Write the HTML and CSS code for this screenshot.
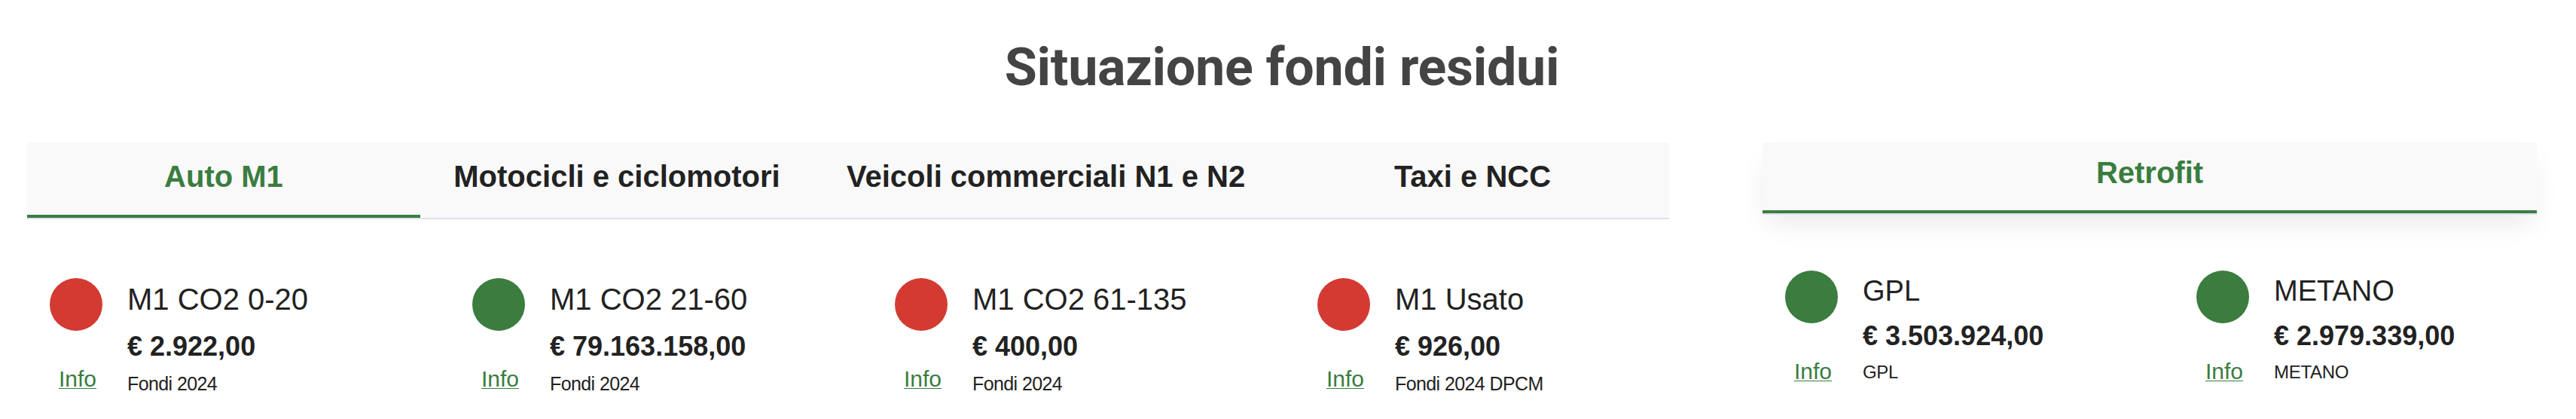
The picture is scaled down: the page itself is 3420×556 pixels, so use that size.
FILE: index.html
```html
<!DOCTYPE html>
<html lang="it">
<head>
<meta charset="utf-8">
<title>Situazione fondi residui</title>
<link rel="stylesheet" href="styles.css">
</head>
<body>
<main class="page">
  <h1 class="title">Situazione fondi residui</h1>
  <div class="panels">
    <section class="panel panel-main">
      <nav class="tabs">
        <a class="tab active">Auto M1</a>
        <a class="tab">Motocicli e ciclomotori</a>
        <a class="tab">Veicoli commerciali N1 e N2</a>
        <a class="tab">Taxi e NCC</a>
      </nav>
      <div class="items items-main">
        <div class="item">
          <div class="side"><span class="dot red"></span><a class="info" href="#">Info</a></div>
          <div class="body"><div class="name">M1 CO2 0-20</div><div class="amount">€ 2.922,00</div><div class="note">Fondi 2024</div></div>
        </div>
        <div class="item">
          <div class="side"><span class="dot green"></span><a class="info" href="#">Info</a></div>
          <div class="body"><div class="name">M1 CO2 21-60</div><div class="amount">€ 79.163.158,00</div><div class="note">Fondi 2024</div></div>
        </div>
        <div class="item">
          <div class="side"><span class="dot red"></span><a class="info" href="#">Info</a></div>
          <div class="body"><div class="name">M1 CO2 61-135</div><div class="amount">€ 400,00</div><div class="note">Fondi 2024</div></div>
        </div>
        <div class="item">
          <div class="side"><span class="dot red"></span><a class="info" href="#">Info</a></div>
          <div class="body"><div class="name">M1 Usato</div><div class="amount">€ 926,00</div><div class="note">Fondi 2024 DPCM</div></div>
        </div>
      </div>
    </section>
    <section class="panel panel-retro">
      <div class="retro-head"><span class="retro-label">Retrofit</span></div>
      <div class="items items-retro">
        <div class="item">
          <div class="side"><span class="dot green"></span><a class="info" href="#">Info</a></div>
          <div class="body"><div class="name">GPL</div><div class="amount">€ 3.503.924,00</div><div class="note">GPL</div></div>
        </div>
        <div class="item">
          <div class="side"><span class="dot green"></span><a class="info" href="#">Info</a></div>
          <div class="body"><div class="name">METANO</div><div class="amount">€ 2.979.339,00</div><div class="note">METANO</div></div>
        </div>
      </div>
    </section>
  </div>
</main>
</body>
</html>
```

FILE: styles.css
```css
* { box-sizing: border-box; }

html, body {
  margin: 0;
  padding: 0;
  background: #ffffff;
}

body {
  font-family: "Liberation Sans", Arial, sans-serif;
  color: #222222;
}

.page {
  padding: 48px 52px 0 36px;
}

.title {
  margin: 0;
  text-align: center;
  font-family: Roboto, "Liberation Sans", sans-serif;
  font-weight: 700;
  font-size: 70px;
  line-height: 82px;
  color: #444444;
  letter-spacing: -0.3px;
}

.panels {
  display: flex;
  align-items: flex-start;
  gap: 124px;
  margin-top: 59px;
}

.panel-main { width: 2180px; }
.panel-retro { width: 1028px; }

/* tabs */
.tabs {
  display: flex;
  background: #f9f9f9;
  border-bottom: 2px solid #dfe2ec;
}

.tab {
  min-width: 522px;
  padding: 21px 44px 27px;
  border-bottom: 4px solid transparent;
  text-align: center;
  font-weight: 700;
  font-size: 40px;
  line-height: 48px;
  color: #222222;
  white-space: nowrap;
}

.tab.active {
  color: #3a7d3f;
  border-bottom-color: #3a7d3f;
}

.retro-head {
  background: #f9f9f9;
  border-bottom: 4px solid #3a7d3f;
  box-shadow: 0 2px 0 #dfe2ec, 0 18px 36px -6px rgba(0, 0, 0, 0.09);
  padding: 16px 0 26px;
  text-align: center;
  font-weight: 700;
  font-size: 40px;
  line-height: 48px;
  color: #3a7d3f;
}

/* items */
.items {
  display: grid;
  padding-left: 30px;
}

.items-main {
  grid-template-columns: repeat(4, 561px);
  padding-top: 78px;
}

.items-retro {
  grid-template-columns: repeat(2, 546px);
  padding-top: 78px;
}

.item {
  display: flex;
  gap: 33px;
}

.side {
  width: 70px;
  display: flex;
  flex-direction: column;
  align-items: center;
}

.dot {
  display: block;
  width: 70px;
  height: 70px;
  border-radius: 50%;
}

.dot.red { background: #d33b32; }
.dot.green { background: #3a7d3f; }

.info {
  margin-top: 47px;
  margin-left: 4px;
  font-size: 30px;
  line-height: 34px;
  color: #3a7d3f;
  text-decoration: underline;
  text-decoration-thickness: 1px;
  text-underline-offset: 2px;
}

.body {
  padding-top: 5px;
}

.name {
  font-size: 40px;
  line-height: 46px;
  color: #222222;
  white-space: nowrap;
}

.amount {
  margin-top: 19px;
  font-size: 36px;
  line-height: 42px;
  font-weight: 700;
  color: #222222;
  white-space: nowrap;
}

.note {
  margin-top: 13px;
  font-size: 25px;
  line-height: 30px;
  letter-spacing: -0.6px;
  color: #222222;
  white-space: nowrap;
}

.items-retro .item {
  margin-top: -2px;
}

.items-retro .name {
  font-size: 38px;
  line-height: 44px;
}

.items-retro .amount {
  margin-top: 17px;
}

.items-retro .note {
  margin-top: 13px;
  font-size: 24px;
  line-height: 28px;
  letter-spacing: -0.3px;
}
```
